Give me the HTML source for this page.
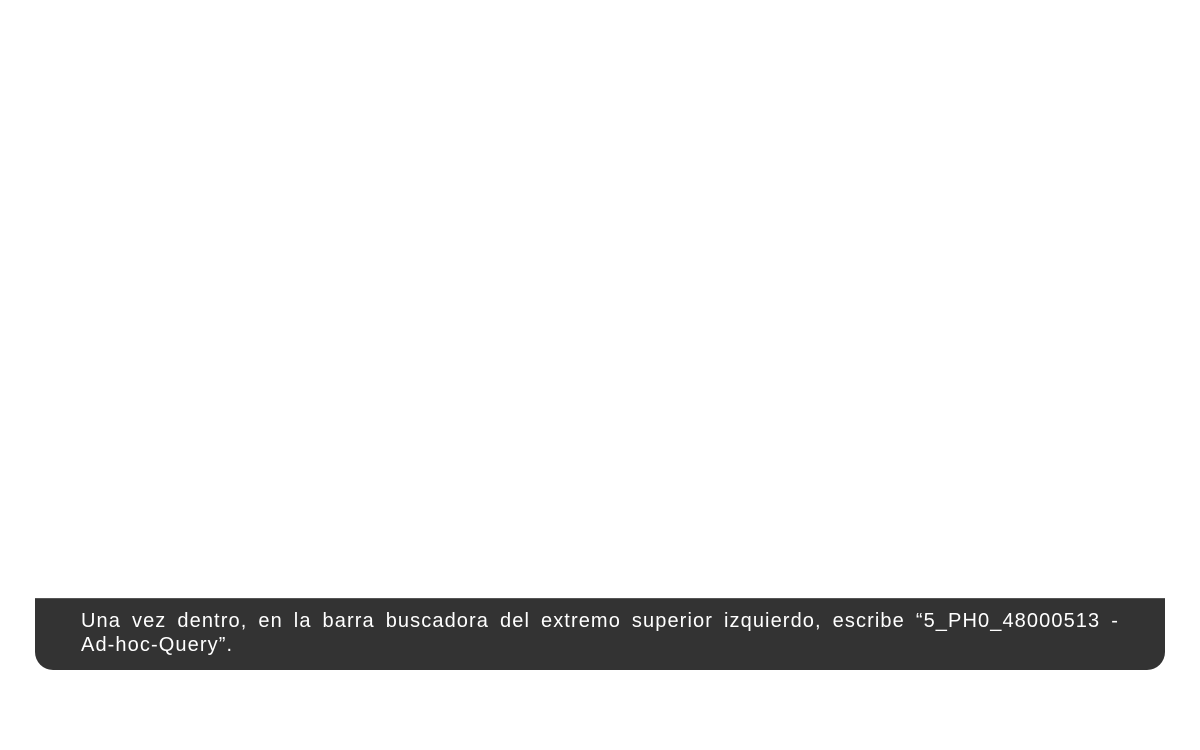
<!DOCTYPE html>
<html><head><meta charset="utf-8"><style>
html,body{margin:0;padding:0;background:#fff;width:1200px;height:750px;overflow:hidden}
.box{position:absolute;left:35px;top:598px;width:1130px;height:72px;background:#333333;border-radius:0 0 18px 18px;border-top:1px solid #555;box-sizing:border-box}
.t{position:absolute;left:46px;top:10px;width:1038px;color:#fff;font-family:"Liberation Sans",sans-serif;font-size:20px;line-height:24px;letter-spacing:1.1px;white-space:nowrap}
.l1{text-align:justify;text-align-last:justify}
</style></head><body>
<div class="box"><div class="t"><div class="l1">Una vez dentro, en la barra buscadora del extremo superior izquierdo, escribe “5_PH0_48000513 -</div><div>Ad-hoc-Query”.</div></div></div>
</body></html>
